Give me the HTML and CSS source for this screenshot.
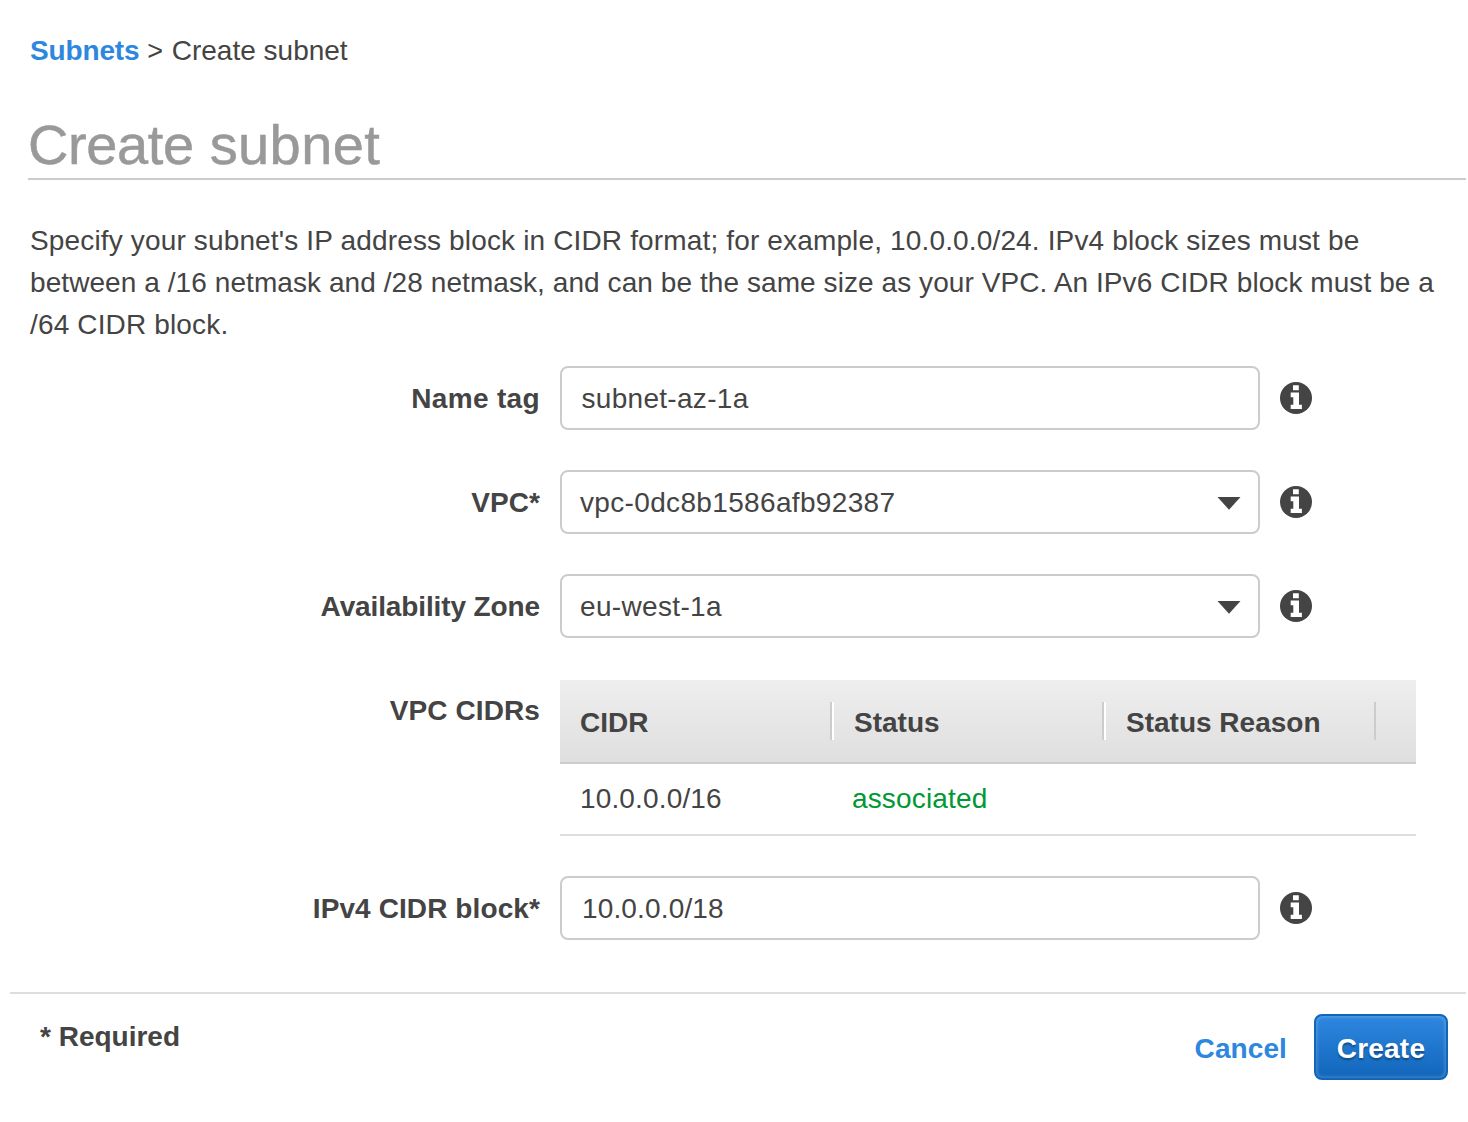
FILE: index.html
```html
<!DOCTYPE html>
<html lang="en">

<head>
    <meta charset="UTF-8">
    <meta name="viewport" content="width=device-width, initial-scale=1.0">
    <title>Create subnet</title>
    <link rel="stylesheet" href="styles.css">
</head>

<body>
    <!-- shared icons -->
    <svg class="sprite" aria-hidden="true">
        <symbol id="icon-info" viewBox="0 0 32 32">
            <circle cx="16" cy="16" r="16" fill="#444"/>
            <path d="M13 3.3h5.8v5H13zM10.7 10.5h8.3v12.2h2.9V27H10.7v-4.3h2.6v-7.5h-2.6z" fill="#fff"/>
        </symbol>
        <symbol id="icon-caret" viewBox="0 0 24 13">
            <path d="M.5 0h23L12 12.7z" fill="#444"/>
        </symbol>
    </svg>

    <div class="container">
        <nav class="breadcrumb"><a href="#">Subnets</a> <span class="arrow">&gt;</span> Create subnet</nav>
        <h1 class="title"><span class="verb">Create</span> subnet</h1>
        <p class="intro">
            <span class="line-1">Specify your subnet's IP address block in CIDR format; for example, 10.0.0.0/24. IPv4 block sizes must be</span><br>
            <span class="line-2">between a /16 netmask and /28 netmask, and can be the same size as your VPC. An IPv6 CIDR block must be a</span><br>
            <span class="line-3">/64 CIDR block.</span>
        </p>

        <form class="form">
            <div class="row">
                <label class="label-name" for="name-tag">Name tag</label>
                <input class="field name-tag" type="text" id="name-tag" value="subnet-az-1a">
                <svg class="info"><use href="#icon-info"/></svg>
            </div>
            <div class="row">
                <label>VPC*</label>
                <div class="field select">
                    <span>vpc-0dc8b1586afb92387</span>
                    <svg class="caret"><use href="#icon-caret"/></svg>
                </div>
                <svg class="info"><use href="#icon-info"/></svg>
            </div>
            <div class="row">
                <label class="label-zone">Availability Zone</label>
                <div class="field select">
                    <span>eu-west-1a</span>
                    <svg class="caret"><use href="#icon-caret"/></svg>
                </div>
                <svg class="info"><use href="#icon-info"/></svg>
            </div>
            <div class="row row-table">
                <label>VPC CIDRs</label>
                <div class="table">
                    <div class="table-head">
                        <div class="th">CIDR</div>
                        <div class="th">Status</div>
                        <div class="th">Status Reason</div>
                    </div>
                    <div class="table-row">
                        <div class="td">10.0.0.0/16</div>
                        <div class="td status">associated</div>
                        <div class="td"></div>
                    </div>
                </div>
            </div>
            <div class="row">
                <label for="cidr-block">IPv4 CIDR block*</label>
                <input class="field" type="text" id="cidr-block" value="10.0.0.0/18">
                <svg class="info"><use href="#icon-info"/></svg>
            </div>
        </form>
    </div>

    <footer class="footer">
        <span class="required">* Required</span>
        <div class="actions">
            <a class="cancel" href="#">Cancel</a>
            <button class="create" type="button">Create</button>
        </div>
    </footer>
</body>

</html>
```

FILE: styles.css
```css
* {
    margin: 0;
    padding: 0;
    box-sizing: border-box;
}
body {
    font-family: 'Helvetica Neue', 'Liberation Sans', Arial, sans-serif;
    font-size: 28px;
    line-height: 42px;
    color: #444;
    background: #fff;
}
a {
    color: #2e87df;
    font-weight: bold;
    text-decoration: none;
}
.sprite {
    display: none;
}
.container {
    padding: 30px 2px 0 28px;
}
.breadcrumb {
    padding-left: 2px;
    white-space: nowrap;
}
.breadcrumb a {
    letter-spacing: -.15px;
}
.arrow {
    margin-right: 1px;
    font-size: 27px;
}
.title {
    height: 71px;
    margin-top: 37px;
    border-bottom: 2px solid #ccc;
    font-size: 56px;
    font-weight: normal;
    line-height: 72px;
    letter-spacing: .4px;
    color: #999;
    -webkit-text-stroke: .5px #999;
}
.verb {
    letter-spacing: -.4px;
}
.intro {
    margin-top: 40px;
    padding-left: 2px;
    white-space: nowrap;
}
.line-1,
.line-3 {
    letter-spacing: .15px;
}
.line-2 {
    letter-spacing: .075px;
}

/* form rows: label, field, info icon */
.form {
    display: flex;
    flex-direction: column;
    gap: 40px;
    margin-top: 20px;
}
.row {
    display: grid;
    grid-template-columns: 512px 700px 32px;
    column-gap: 20px;
    align-items: center;
}
.row label {
    padding-top: 2px;
    font-weight: bold;
    letter-spacing: .1px;
    text-align: right;
    white-space: nowrap;
}
.row .label-name {
    letter-spacing: .35px;
}
.row .label-zone {
    letter-spacing: -.12px;
}
.field {
    width: 700px;
    height: 64px;
    padding: 2px 20px 0;
    border: 2px solid #ccc;
    border-radius: 8px;
    background: #fff;
    font: inherit;
    letter-spacing: .15px;
    color: #444;
}
.name-tag {
    padding-left: 19.5px;
    letter-spacing: .3px;
}
.select {
    display: flex;
    align-items: center;
    justify-content: space-between;
    padding: 2px 17px 0 18px;
    letter-spacing: .34px;
}
.caret {
    width: 24px;
    height: 13px;
    margin-top: 1px;
}
.info {
    width: 32px;
    height: 32px;
}

.row-table {
    grid-template-columns: 512px 856px;
    align-items: start;
    margin-top: 2px;
}
.row-table label {
    padding-top: 10px;
}
.table-head,
.table-row {
    display: grid;
    grid-template-columns: 272px 272px 272px;
}
.table-head {
    height: 84px;
    align-items: center;
    border-bottom: 2px solid #ccc;
    background: linear-gradient(#eee, #dfdfdf);
    font-weight: bold;
}
.th {
    height: 38px;
    padding-left: 20px;
    border-right: 2px solid #ccc;
    line-height: 42px;
}
.th + .th {
    border-left: 2px solid #fff;
}
.table-row {
    height: 72px;
    border-bottom: 2px solid #ddd;
    line-height: 70px;
    letter-spacing: .15px;
}
.td {
    padding-left: 20px;
}
.status {
    color: #093;
}

.footer {
    display: flex;
    justify-content: space-between;
    margin: 52px 2px 0 10px;
    padding: 20px 18px 0 30px;
    border-top: 2px solid #ddd;
}
.required {
    padding-top: 2px;
    font-weight: bold;
}
.actions {
    display: flex;
    align-items: center;
    gap: 27px;
}
.cancel {
    padding-top: 3px;
    letter-spacing: .1px;
}
.create {
    width: 134px;
    height: 66px;
    padding-top: 4px;
    border: 2px solid #1166bb;
    border-radius: 8px;
    background: linear-gradient(#2e87df, #1166bb);
    box-shadow: inset 0 0 4px rgba(255, 255, 255, .35);
    font: inherit;
    font-weight: bold;
    letter-spacing: .2px;
    color: #fff;
    text-shadow: 0 2px 2px rgba(0, 0, 0, .35);
}
```
